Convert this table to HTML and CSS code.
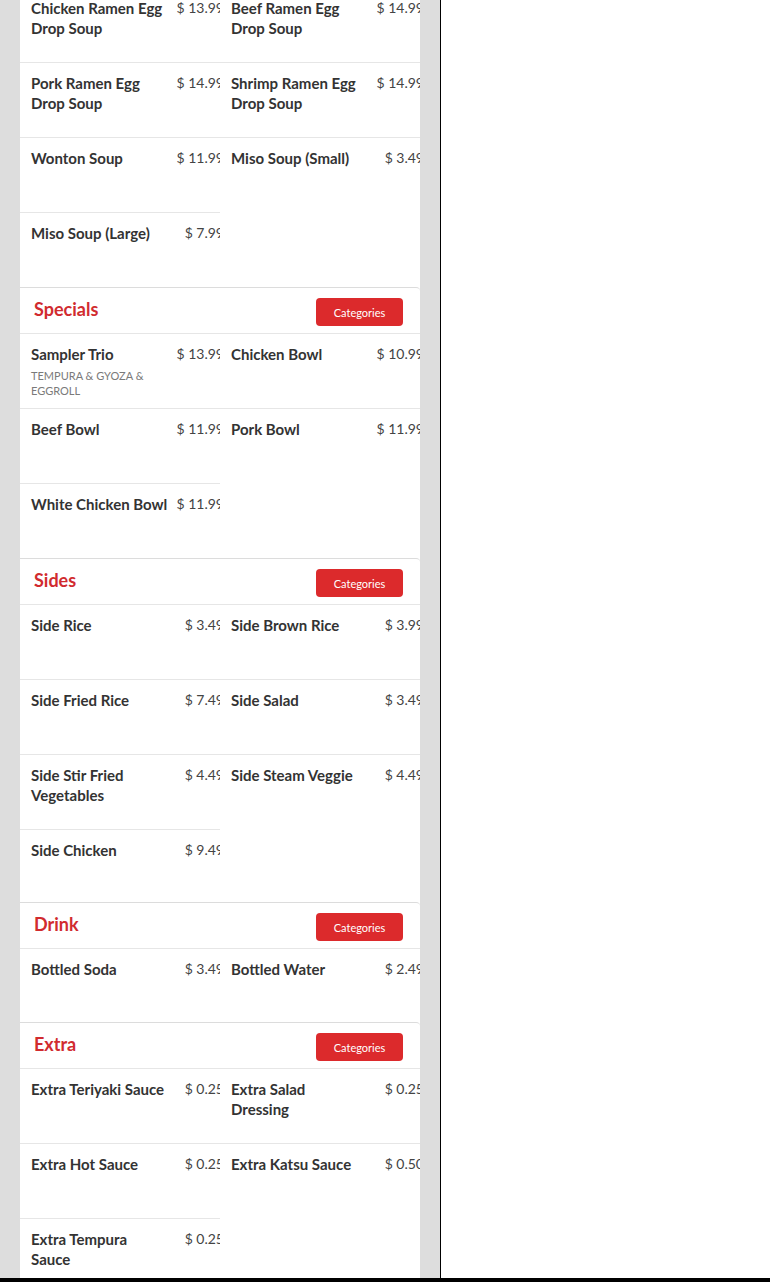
FILE: index.html
```html
<!DOCTYPE html>
<html lang="en">
<head>
    <meta charset="UTF-8">
    <meta name="viewport" content="width=device-width, initial-scale=1.0">
    <title>Menu</title>
    <link rel="stylesheet" href="styles.css">
</head>
<body>
    <div class="page">
        <div class="menu-col">
            <div class="menu">
                <section class="category first">
                    <div class="items">
                        <div class="item"><div class="name">Chicken Ramen Egg Drop Soup</div><div class="price">$ 13.99</div></div>
                        <div class="item"><div class="name">Beef Ramen Egg Drop Soup</div><div class="price">$ 14.99</div></div>
                        <div class="item"><div class="name">Pork Ramen Egg Drop Soup</div><div class="price">$ 14.99</div></div>
                        <div class="item"><div class="name">Shrimp Ramen Egg Drop Soup</div><div class="price">$ 14.99</div></div>
                        <div class="item"><div class="name">Wonton Soup</div><div class="price">$ 11.99</div></div>
                        <div class="item"><div class="name">Miso Soup (Small)</div><div class="price">$ 3.49</div></div>
                        <div class="item"><div class="name">Miso Soup (Large)</div><div class="price">$ 7.99</div></div>
                    </div>
                </section>

                <section class="category">
                    <div class="cat-head">
                        <h3>Specials</h3>
                        <button class="cat-btn">Categories</button>
                    </div>
                    <div class="items">
                        <div class="item">
                            <div class="name">Sampler Trio<p class="desc">Tempura &amp; Gyoza &amp; Eggroll</p></div>
                            <div class="price">$ 13.99</div>
                        </div>
                        <div class="item"><div class="name">Chicken Bowl</div><div class="price">$ 10.99</div></div>
                        <div class="item"><div class="name">Beef Bowl</div><div class="price">$ 11.99</div></div>
                        <div class="item"><div class="name">Pork Bowl</div><div class="price">$ 11.99</div></div>
                        <div class="item"><div class="name">White Chicken Bowl</div><div class="price">$ 11.99</div></div>
                    </div>
                </section>

                <section class="category">
                    <div class="cat-head">
                        <h3>Sides</h3>
                        <button class="cat-btn">Categories</button>
                    </div>
                    <div class="items">
                        <div class="item"><div class="name">Side Rice</div><div class="price">$ 3.49</div></div>
                        <div class="item"><div class="name">Side Brown Rice</div><div class="price">$ 3.99</div></div>
                        <div class="item"><div class="name">Side Fried Rice</div><div class="price">$ 7.49</div></div>
                        <div class="item"><div class="name">Side Salad</div><div class="price">$ 3.49</div></div>
                        <div class="item"><div class="name">Side Stir Fried Vegetables</div><div class="price">$ 4.49</div></div>
                        <div class="item"><div class="name">Side Steam Veggie</div><div class="price">$ 4.49</div></div>
                        <div class="item shorter"><div class="name">Side Chicken</div><div class="price">$ 9.49</div></div>
                    </div>
                </section>

                <section class="category">
                    <div class="cat-head">
                        <h3>Drink</h3>
                        <button class="cat-btn">Categories</button>
                    </div>
                    <div class="items">
                        <div class="item short"><div class="name">Bottled Soda</div><div class="price">$ 3.49</div></div>
                        <div class="item short"><div class="name">Bottled Water</div><div class="price">$ 2.49</div></div>
                    </div>
                </section>

                <section class="category">
                    <div class="cat-head">
                        <h3>Extra</h3>
                        <button class="cat-btn">Categories</button>
                    </div>
                    <div class="items">
                        <div class="item"><div class="name">Extra Teriyaki Sauce</div><div class="price">$ 0.25</div></div>
                        <div class="item"><div class="name">Extra Salad<br>Dressing</div><div class="price">$ 0.25</div></div>
                        <div class="item"><div class="name">Extra Hot Sauce</div><div class="price">$ 0.25</div></div>
                        <div class="item"><div class="name">Extra Katsu Sauce</div><div class="price">$ 0.50</div></div>
                        <div class="item"><div class="name">Extra Tempura Sauce</div><div class="price">$ 0.25</div></div>
                    </div>
                </section>
            </div>
        </div>
        <div class="side"></div>
    </div>
</body>
</html>
```

FILE: styles.css
```css
html, body {
    margin: 0;
    padding: 0;
}
body {
    font-family: Lato, 'Open Sans', Arial, sans-serif;
    background: #fff;
    color: #333;
    height: 1282px;
    overflow: hidden;
}
.page {
    display: flex;
    height: 1278px;
    border-bottom: 4px solid #000;
    overflow: hidden;
}
.menu-col {
    width: 400px;
    padding: 0 20px;
    background: #dddddd;
    border-right: 1px solid #000;
    flex-shrink: 0;
    overflow: hidden;
}
.menu {
    background: #fff;
    margin-top: -13px;
}
.side {
    flex: 1;
    background: #fff;
}
.category {
    background: #fff;
}
.cat-head {
    height: 45px;
    border-top: 1px solid #dcdcdc;
    border-top-right-radius: 4px;
    display: flex;
    align-items: center;
    justify-content: space-between;
    padding: 0 17px 0 14px;
}
.cat-head h3 {
    margin: -3px 0 0;
    font-size: 18px;
    font-weight: 700;
    color: #d12b2f;
}
.cat-btn {
    width: 87px;
    height: 28px;
    margin-top: 3px;
    border: none;
    border-radius: 4px;
    background: #dc2a2c;
    color: #fff;
    font-family: Lato, Arial, sans-serif;
    font-size: 11px;
    padding: 0;
    cursor: pointer;
}
.items {
    display: grid;
    grid-template-columns: 200px 200px;
}
.item {
    box-sizing: border-box;
    min-height: 75px;
    border-top: 1px solid #e6e6e6;
    padding: 10px 0 10px 11px;
    display: flex;
    align-items: flex-start;
    overflow: hidden;
}
.item.short {
    min-height: 74px;
}
.item.shorter {
    min-height: 73px;
}
.name {
    width: 136.5px;
    font-size: 15px;
    font-weight: 700;
    line-height: 20px;
    color: #333;
}
.desc {
    margin: 4px 0 0;
    font-size: 11px;
    font-weight: 400;
    line-height: 15px;
    text-transform: uppercase;
    color: #7a7a7a;
}
.price {
    margin-left: auto;
    margin-right: -4px;
    white-space: nowrap;
    font-size: 14px;
    line-height: 20px;
    color: #444;
}
```
